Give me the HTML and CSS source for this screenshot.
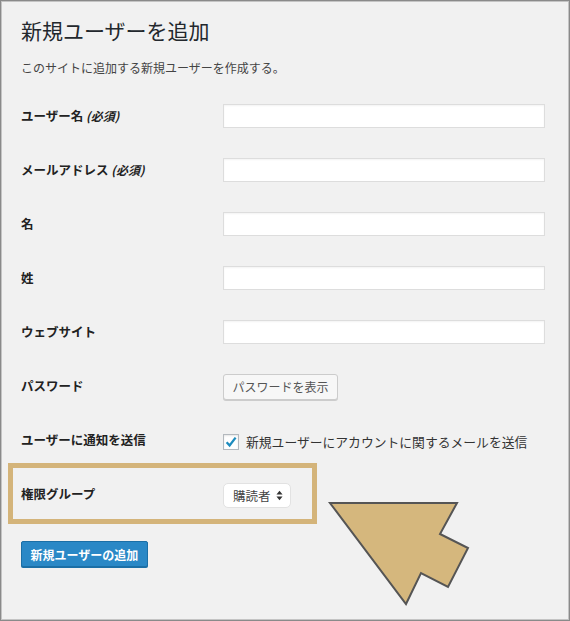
FILE: index.html
```html
<!DOCTYPE html>
<html lang="ja">
<head>
<meta charset="utf-8">
<title>新規ユーザーを追加</title>
<link rel="stylesheet" href="styles.css">
</head>
<body>
<div class="frame">
  <h1 class="title">新規ユーザーを追加</h1>
  <p class="desc">このサイトに追加する新規ユーザーを作成する。</p>
  <div class="form">
    <div class="row">
      <div class="lbl">ユーザー名 <span class="req">(必須)</span></div>
      <div class="field"><input class="text" type="text"></div>
    </div>
    <div class="row">
      <div class="lbl">メールアドレス <span class="req">(必須)</span></div>
      <div class="field"><input class="text" type="text"></div>
    </div>
    <div class="row">
      <div class="lbl">名</div>
      <div class="field"><input class="text" type="text"></div>
    </div>
    <div class="row">
      <div class="lbl">姓</div>
      <div class="field"><input class="text" type="text"></div>
    </div>
    <div class="row">
      <div class="lbl">ウェブサイト</div>
      <div class="field"><input class="text" type="text"></div>
    </div>
    <div class="row">
      <div class="lbl">パスワード</div>
      <div class="field"><span class="btn">パスワードを表示</span></div>
    </div>
    <div class="row">
      <div class="lbl">ユーザーに通知を送信</div>
      <div class="field check-field">
        <span class="checkbox"><svg viewBox="0 0 16 16" width="16" height="16"><path d="M3.6 8.2 L6.6 11.4 L12.6 3.6" fill="none" stroke="#1e8cbe" stroke-width="2.3" stroke-linejoin="miter"/></svg></span>
        <span class="check-text">新規ユーザーにアカウントに関するメールを送信</span>
      </div>
    </div>
    <div class="row row-hl">
      <div class="lbl">権限グループ</div>
      <div class="field">
        <span class="select">購読者<svg class="updown" viewBox="0 0 8 12" width="7" height="11"><path d="M4 0.5 L7.5 4.8 L0.5 4.8 Z M4 11.5 L7.5 7.2 L0.5 7.2 Z" fill="#333"/></svg></span>
      </div>
    </div>
  </div>
  <div class="submit-wrap"><span class="primary">新規ユーザーの追加</span></div>
  <svg class="arrow" viewBox="0 0 570 621" width="570" height="621">
    <polygon points="330,503 457,503 440,534 468,548 448,587 421,573 406,604" fill="#d5b77d" stroke="#555555" stroke-width="2" stroke-linejoin="miter"/>
  </svg>
</div>
</body>
</html>
```

FILE: styles.css
```css
html, body {
  margin: 0;
  padding: 0;
  background: #f1f1f1;
}

.frame {
  position: relative;
  box-sizing: border-box;
  width: 570px;
  height: 621px;
  border: 1px solid #8a8a8a;
  box-shadow: inset 0 0 0 1px #c4c4c4;
  background: #f1f1f1;
  padding: 15px 0 0 20px;
  font-family: "Noto Sans CJK JP", "Noto Sans", sans-serif;
  color: #23282d;
  overflow: hidden;
}

.title {
  margin: 0;
  font-size: 21px;
  font-weight: 400;
  line-height: 28px;
  color: #23282d;
}

.desc {
  margin: 15px 0 0 0;
  font-size: 12px;
  line-height: 18px;
  color: #444;
}

.form {
  margin-top: 12px;
  display: flex;
  flex-direction: column;
}

.row {
  display: flex;
  align-items: center;
  height: 54px;
}

.lbl {
  width: 202px;
  flex: none;
  font-size: 12.5px;
  font-weight: 700;
  color: #222;
  line-height: 18px;
}

.req {
  font-style: italic;
  font-size: 12px;
  font-weight: 700;
}

.field {
  display: flex;
  align-items: center;
}

.text {
  box-sizing: border-box;
  width: 322px;
  height: 24px;
  margin: 0;
  border: 1px solid #dddddd;
  background: #fff;
  box-shadow: inset 0 1px 2px rgba(0, 0, 0, 0.05);
  padding: 0;
  outline: none;
}

.btn {
  box-sizing: border-box;
  display: inline-flex;
  align-items: center;
  height: 26px;
  width: 115px;
  justify-content: center;
  border: 1px solid #cccccc;
  border-radius: 3px;
  background: #f7f7f7;
  box-shadow: 0 1px 0 #cccccc;
  font-size: 12px;
  color: #555;
  margin-top: 1px;
}

.check-field {
  gap: 7px;
  margin-top: 3px;
}

.checkbox {
  box-sizing: border-box;
  width: 16px;
  height: 16px;
  border: 1px solid #b4b9be;
  background: #fff;
  box-shadow: inset 0 1px 2px rgba(0, 0, 0, 0.1);
  display: flex;
  align-items: center;
  justify-content: center;
}

.checkbox svg {
  display: block;
  margin: -1px;
}

.check-text {
  font-size: 12.8px;
  color: #333;
  line-height: 18px;
}

.row-hl {
  position: relative;
}

.row-hl::before {
  content: "";
  position: absolute;
  left: -13px;
  top: -4px;
  width: 309px;
  height: 61px;
  box-sizing: border-box;
  border: 5px solid #d4b47a;
  pointer-events: none;
}

.select {
  box-sizing: border-box;
  display: inline-flex;
  align-items: center;
  justify-content: space-between;
  width: 68px;
  height: 25px;
  padding: 0 7px 0 9px;
  background: #fff;
  border: 1px solid #e2e2e2;
  border-radius: 5px;
  font-size: 12.5px;
  color: #444;
  margin-top: 2px;
}

.updown {
  display: block;
}

.submit-wrap {
  display: flex;
  margin-top: 20px;
}

.primary {
  box-sizing: border-box;
  display: inline-flex;
  align-items: center;
  justify-content: center;
  width: 127px;
  height: 26px;
  background: #2a88c6;
  border: 1px solid #1b6fa6;
  border-radius: 2px;
  box-shadow: 0 1px 0 #1b6fa6;
  color: #fff;
  font-size: 12px;
  font-weight: 700;
}

.arrow {
  position: absolute;
  left: -1px;
  top: -1px;
  pointer-events: none;
}
```
